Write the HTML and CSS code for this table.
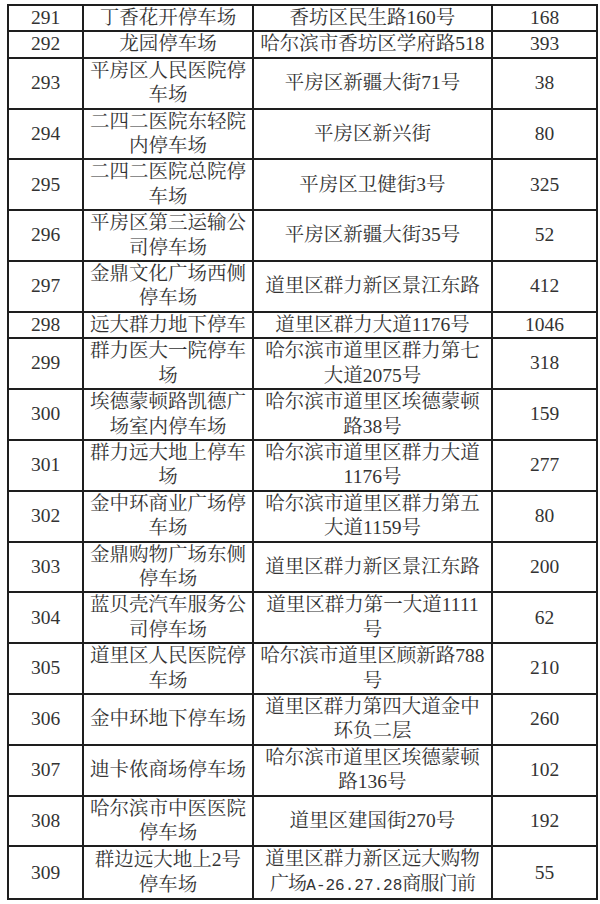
FILE: index.html
```html
<!DOCTYPE html>
<html lang="zh-CN">
<head>
<meta charset="utf-8">
<title>停车场列表</title>
<link rel="stylesheet" href="styles.css">
</head>
<body>
<table class="lots">
  <colgroup>
    <col class="c-no">
    <col class="c-name">
    <col class="c-addr">
    <col class="c-cnt">
  </colgroup>
  <tbody>
    <tr class="one"><td class="num">291</td><td class="name">丁香花开停车场</td><td class="addr">香坊区民生路160号</td><td class="num">168</td></tr>
    <tr class="one"><td class="num">292</td><td class="name">龙园停车场</td><td class="addr">哈尔滨市香坊区学府路518</td><td class="num">393</td></tr>
    <tr class="two"><td class="num">293</td><td class="name">平房区人民医院停<br>车场</td><td class="addr">平房区新疆大街71号</td><td class="num">38</td></tr>
    <tr class="two"><td class="num">294</td><td class="name">二四二医院东轻院<br>内停车场</td><td class="addr">平房区新兴街</td><td class="num">80</td></tr>
    <tr class="two"><td class="num">295</td><td class="name">二四二医院总院停<br>车场</td><td class="addr">平房区卫健街3号</td><td class="num">325</td></tr>
    <tr class="two"><td class="num">296</td><td class="name">平房区第三运输公<br>司停车场</td><td class="addr">平房区新疆大街35号</td><td class="num">52</td></tr>
    <tr class="two"><td class="num">297</td><td class="name">金鼎文化广场西侧<br>停车场</td><td class="addr">道里区群力新区景江东路</td><td class="num">412</td></tr>
    <tr class="one"><td class="num">298</td><td class="name">远大群力地下停车</td><td class="addr">道里区群力大道1176号</td><td class="num">1046</td></tr>
    <tr class="two"><td class="num">299</td><td class="name">群力医大一院停车<br>场</td><td class="addr">哈尔滨市道里区群力第七<br>大道2075号</td><td class="num">318</td></tr>
    <tr class="two"><td class="num">300</td><td class="name">埃德蒙顿路凯德广<br>场室内停车场</td><td class="addr">哈尔滨市道里区埃德蒙顿<br>路38号</td><td class="num">159</td></tr>
    <tr class="two"><td class="num">301</td><td class="name">群力远大地上停车<br>场</td><td class="addr">哈尔滨市道里区群力大道<br>1176号</td><td class="num">277</td></tr>
    <tr class="two"><td class="num">302</td><td class="name">金中环商业广场停<br>车场</td><td class="addr">哈尔滨市道里区群力第五<br>大道1159号</td><td class="num">80</td></tr>
    <tr class="two"><td class="num">303</td><td class="name">金鼎购物广场东侧<br>停车场</td><td class="addr">道里区群力新区景江东路</td><td class="num">200</td></tr>
    <tr class="two"><td class="num">304</td><td class="name">蓝贝壳汽车服务公<br>司停车场</td><td class="addr">道里区群力第一大道1111<br>号</td><td class="num">62</td></tr>
    <tr class="two"><td class="num">305</td><td class="name">道里区人民医院停<br>车场</td><td class="addr">哈尔滨市道里区顾新路788<br>号</td><td class="num">210</td></tr>
    <tr class="two"><td class="num">306</td><td class="name">金中环地下停车场</td><td class="addr">道里区群力第四大道金中<br>环负二层</td><td class="num">260</td></tr>
    <tr class="two"><td class="num">307</td><td class="name">迪卡侬商场停车场</td><td class="addr">哈尔滨市道里区埃德蒙顿<br>路136号</td><td class="num">102</td></tr>
    <tr class="two"><td class="num">308</td><td class="name">哈尔滨市中医医院<br>停车场</td><td class="addr">道里区建国街270号</td><td class="num">192</td></tr>
    <tr class="two"><td class="num">309</td><td class="name">群边远大地上2号<br>停车场</td><td class="addr">道里区群力新区远大购物<br><span class="tight">广场<span class="mono">A-26.27.28</span>商服门前</span></td><td class="num">55</td></tr>
  </tbody>
</table>
</body>
</html>
```

FILE: styles.css
```css
html, body {
  background: #ffffff;
}
body {
  margin: 4px 0 0 7px;
  font-family: "Liberation Serif", "Noto Serif CJK SC", "Noto Sans CJK SC", serif;
  color: #333333;
}
.lots {
  border-collapse: collapse;
  table-layout: fixed;
  width: 589px;
}
.c-no { width: 75px; }
.c-name { width: 170px; }
.c-addr { width: 239px; }
.c-cnt { width: 105px; }
.lots td {
  border: 2px solid #1e1e1e;
  padding: 0;
  text-align: center;
  vertical-align: middle;
  white-space: nowrap;
  overflow: hidden;
  line-height: 24.4px;
}
.lots tr.one td { height: 23.4px; }
.lots tr.two td { height: 48.8px; }
.num {
  font-size: 19.5px;
}
.name {
  font-size: 19.5px;
}
.addr {
  font-size: 19.5px;
}
.tight {
  letter-spacing: -0.8px;
  font-size: 19px;
}
.mono {
  font-family: "Liberation Mono", "Noto Sans CJK SC", monospace;
  font-size: 16px;
  letter-spacing: 0;
}
```
